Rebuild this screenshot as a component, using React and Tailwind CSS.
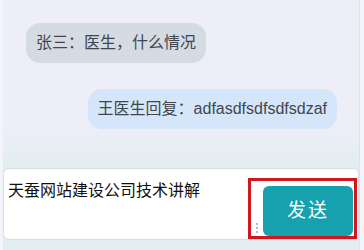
import React from 'react';

const font = { fontFamily: '"Liberation Sans", "Noto Sans CJK SC", sans-serif' };

const messages = [
  { side: 'left', text: '张三：医生，什么情况' },
  { side: 'right', text: '王医生回复：adfasdfsdfsdfsdzaf' },
];

const Bubble = ({ side, text }) => (
  <div className={side === 'left' ? 'flex justify-start pl-[23px]' : 'flex justify-end pr-[22px]'}>
    <div
      className={
        'h-[40px] flex items-center px-[10px] rounded-[14px] text-[16px] text-[#41464d] ' +
        (side === 'left' ? 'bg-[#d4dbe3]' : 'bg-[#d6e6fa]')
      }
    >
      {text}
    </div>
  </div>
);

const App = () => {
  return (
    <div className="w-[364px] h-[250px] flex bg-[#f4f4fb] overflow-hidden" style={font}>
      <div className="ml-[3px] w-[357px] h-full flex flex-col border-r border-[#dfe2ea] bg-gradient-to-b from-[#eeeef9] from-50% to-[#e3eef1] to-65%">
        {/* messages */}
        <div className="flex flex-col gap-[26px] pt-[23px] h-[168px]">
          {messages.map((m, i) => (
            <Bubble key={i} {...m} />
          ))}
        </div>

        {/* input bar */}
        <div className="h-[72px] bg-white rounded-[6px] border border-[#d6dde2] flex">
          <div className="flex-1 pl-[4px] pt-[10px] text-[16px] leading-[24px] text-[#111]">
            天蚕网站建设公司技术讲解
          </div>
          <div className="relative mt-[9px] mr-[1px] w-[109px] border-[3px] border-[#d2161d] pl-[12px] pt-[5px] pr-[1px]">
            <div className="absolute left-[5px] bottom-[3px] flex flex-col gap-[2px]">
              <span className="w-[2px] h-[2px] bg-[#b8bcbf]" />
              <span className="w-[2px] h-[2px] bg-[#b8bcbf]" />
              <span className="w-[2px] h-[2px] bg-[#b8bcbf]" />
            </div>
            <button className="w-[90px] h-[50px] rounded-[6px] bg-[#17a0ae] text-white text-[19px] tracking-[2px]">
              发送
            </button>
          </div>
        </div>
      </div>
    </div>
  );
};

export default App;
